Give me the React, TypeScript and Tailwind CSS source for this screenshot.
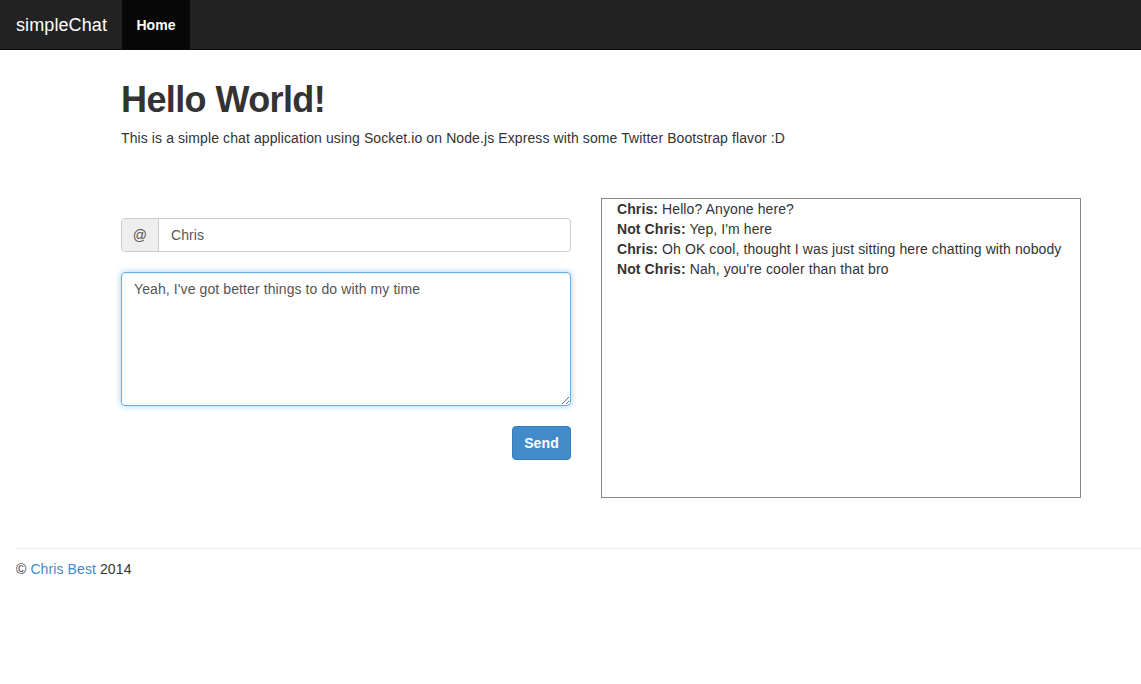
import React from 'react'

const messages = [
  { from: 'Chris', text: 'Hello? Anyone here?' },
  { from: 'Not Chris', text: "Yep, I'm here" },
  { from: 'Chris', text: 'Oh OK cool, thought I was just sitting here chatting with nobody' },
  { from: 'Not Chris', text: "Nah, you're cooler than that bro" },
]

export default function App() {
  return (
    <div className="min-h-screen bg-white text-[14px] leading-[20px] tracking-[0.1px] text-[#333] font-['Liberation_Sans',Arial,sans-serif]">
      {/* Navbar */}
      <nav className="flex h-[50px] items-stretch border-b border-[#080808] bg-[#222]">
        <a className="flex items-center pl-[16px] pr-[15px] text-[18px] text-white tracking-[0.1px]">simpleChat</a>
        <a className="flex w-[68px] items-center justify-center bg-[#080808] text-[14px] font-semibold text-white">Home</a>
      </nav>

      <main className="ml-[121px] w-[960px]">
        <h1 className="mt-[30px] text-[36px] leading-[40px] font-bold text-[#333] tracking-[-0.6px]">Hello World!</h1>
        <p className="mt-[8px] text-[14px]">
          This is a simple chat application using Socket.io on Node.js Express with some Twitter Bootstrap flavor :D
        </p>

        <div className="mt-[50px] flex gap-[30px]">
          {/* Compose */}
          <div className="w-[450px] pt-[20px]">
            <div className="flex h-[34px] rounded-[4px] border border-[#ccc]">
              <span className="flex w-[37px] items-center justify-center rounded-l-[4px] border-r border-[#ccc] bg-[#eee] text-[14px] text-[#555]">@</span>
              <input
                className="flex-1 rounded-r-[4px] px-[12px] text-[14px] text-[#555] outline-none"
                defaultValue="Chris"
              />
            </div>
            <textarea
              className="mt-[20px] block h-[134px] w-full rounded-[4px] border border-[#66afe9] px-[12px] py-[6px] text-[14px] text-[#555] outline-none shadow-[inset_0_1px_1px_rgba(0,0,0,0.075),0_0_6px_rgba(102,175,233,0.6)]"
              defaultValue="Yeah, I've got better things to do with my time"
            />
            <div className="mt-[20px] flex justify-end">
              <button className="h-[34px] w-[59px] rounded-[4px] border border-[#357ebd] bg-[#428bca] text-[14px] font-semibold text-white">
                Send
              </button>
            </div>
          </div>

          {/* Chat log */}
          <div className="h-[300px] w-[480px] border border-[#888] pl-[15px]">
            <ul>
              {messages.map((m, i) => (
                <li key={i}>
                  <strong className="font-bold">{m.from}:</strong> {m.text}
                </li>
              ))}
            </ul>
          </div>
        </div>
      </main>

      <footer className="ml-[16px] mt-[50px]">
        <hr className="border-t border-[#eee]" />
        <p className="mt-[10px]">
          © <a className="text-[#428bca]">Chris Best</a> 2014
        </p>
      </footer>
    </div>
  )
}
